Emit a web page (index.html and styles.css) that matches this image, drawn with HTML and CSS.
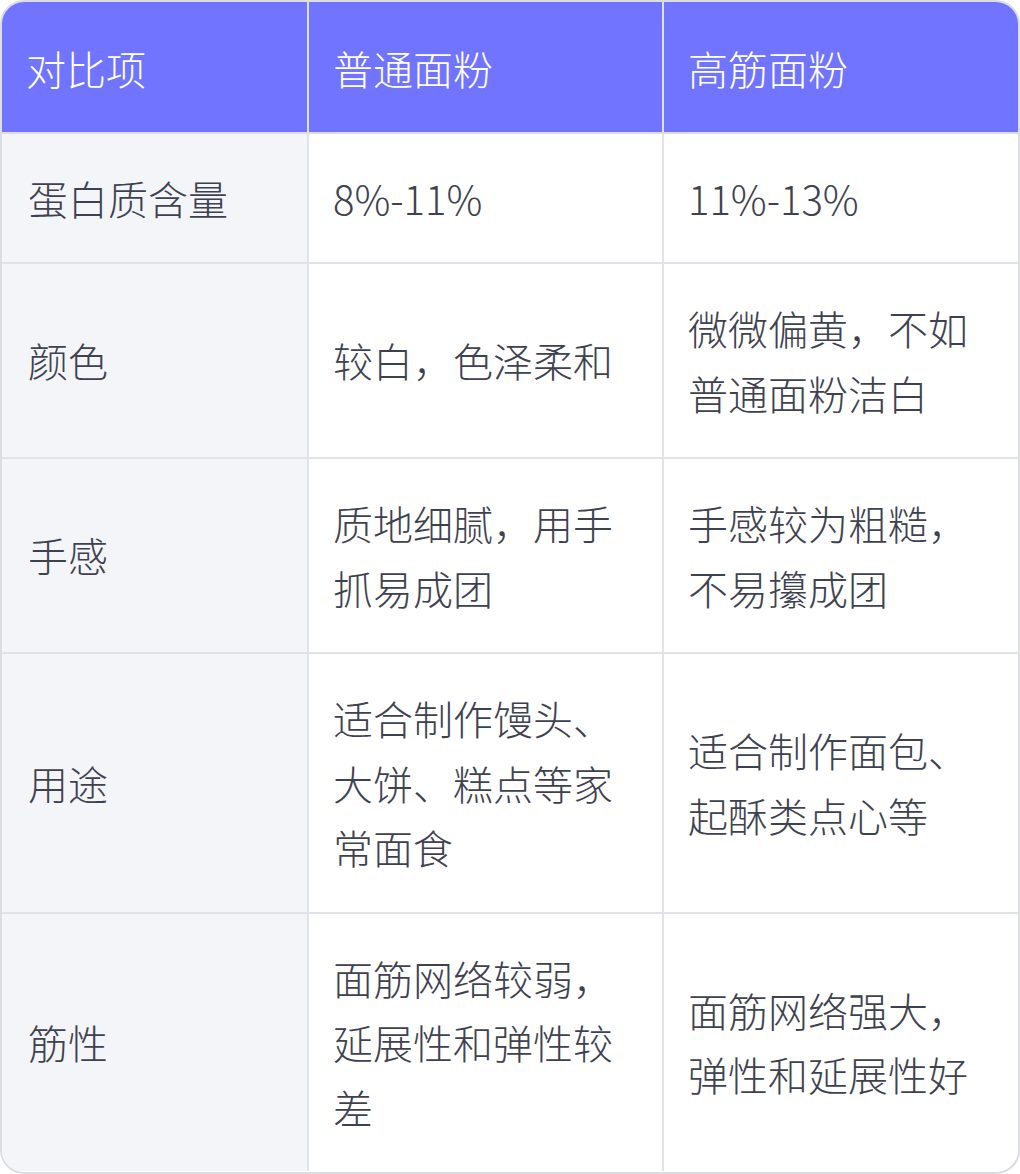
FILE: index.html
```html
<!DOCTYPE html>
<html lang="zh-CN">
<head>
<meta charset="utf-8">
<title>普通面粉与高筋面粉对比</title>
<link rel="stylesheet" href="styles.css">
</head>
<body>
<div class="wrap">
<table class="cmp">
<colgroup><col class="c1"><col class="c2"><col class="c3"></colgroup>
<thead>
<tr><th>对比项</th><th>普通面粉</th><th>高筋面粉</th></tr>
</thead>
<tbody>
<tr><td class="key">蛋白质含量</td><td>8%-11%</td><td>11%-13%</td></tr>
<tr><td class="key">颜色</td><td>较白，色泽柔和</td><td>微微偏黄，不如普通面粉洁白</td></tr>
<tr><td class="key">手感</td><td>质地细腻，用手抓易成团</td><td>手感较为粗糙，不易攥成团</td></tr>
<tr><td class="key">用途</td><td>适合制作馒头、大饼、糕点等家常面食</td><td>适合制作面包、起酥类点心等</td></tr>
<tr><td class="key">筋性</td><td>面筋网络较弱，延展性和弹性较差</td><td>面筋网络强大，弹性和延展性好</td></tr>
</tbody>
</table>
</div>
</body>
</html>
```

FILE: styles.css
```css
html, body {
  margin: 0;
  padding: 0;
  background: #ffffff;
}
.wrap {
  width: 1020px;
  height: 1174px;
  box-sizing: border-box;
  border: 2px solid #dcdde3;
  border-radius: 24px;
  overflow: hidden;
  background: #ffffff;
}
.cmp {
  width: 100%;
  border-collapse: separate;
  border-spacing: 0;
  table-layout: fixed;
  font-family: "Noto Sans CJK SC Light", "Noto Sans CJK SC", "Noto Sans", sans-serif;
  font-weight: 300;
  font-size: 40px;
  line-height: 64.5px;
  color: #3e4250;
}
.c1 { width: 307px; }
.c2 { width: 355px; }
.c3 { width: auto; }
.cmp th,
.cmp td {
  text-align: left;
  vertical-align: middle;
  padding: 32px 24px;
  border-right: 2px solid #e2e3e8;
  border-bottom: 2px solid #e2e3e8;
  font-weight: 300;
}
.cmp th:last-child,
.cmp td:last-child {
  border-right: none;
}
.cmp tbody tr:last-child td {
  border-bottom: none;
}
.cmp th {
  background: #7074ff;
  color: #ffffff;
  padding-top: 34px;
  padding-bottom: 31px;
  border-right-color: #dfe0ee;
  border-bottom-color: #dcdde3;
}
.cmp td.key {
  background: #f4f5f9;
  padding-left: 26px;
}
```
